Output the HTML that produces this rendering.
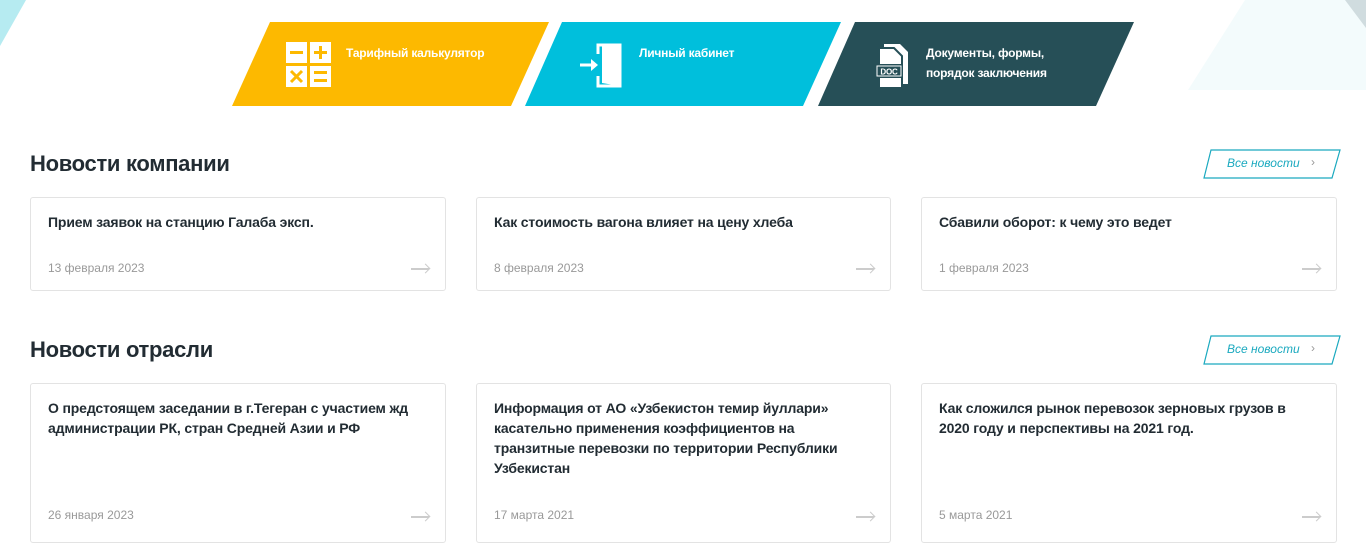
<!DOCTYPE html>
<html><head><meta charset="utf-8"><style>
*{margin:0;padding:0;box-sizing:border-box}
body{width:1366px;height:539px;overflow:hidden;background:#fff;font-family:"Liberation Sans",sans-serif;position:relative;color:#222c33}
.abs{position:absolute}
.ban{position:absolute;top:22px;height:84px;color:#fff;font-weight:bold;font-size:12px;line-height:20px;letter-spacing:-0.2px}
.ban svg.bg{position:absolute;left:0;top:0}
.ban .t{position:absolute;top:43px}
h2{position:absolute;left:30px;font-size:22px;font-weight:bold;color:#222c33;letter-spacing:-0.3px}
.btn{position:absolute;left:1203px;width:138px;height:30px}
.btn span{position:absolute;left:24px;top:7px;font-size:12px;font-style:italic;color:#1aa9bf}
.btn b{position:absolute;left:108px;top:6px;font-size:12px;color:#999;font-weight:normal}
.card{position:absolute;border:1px solid #e3e3e3;border-radius:3px;background:#fff}
.card .h{position:absolute;left:17px;top:14px;font-size:14px;font-weight:bold;line-height:20px;color:#222c33;width:385px;letter-spacing:-0.15px}
.card .d{position:absolute;left:17px;font-size:12px;color:#999}
.card .a{position:absolute;right:16px;width:18px;height:1.5px;background:#ccc}
.card .a:after{content:"";position:absolute;right:0;top:-3px;width:6px;height:6px;border-top:1.5px solid #ccc;border-right:1.5px solid #ccc;transform:rotate(45deg)}
</style></head><body>
<svg class="abs" style="left:0;top:0" width="1366" height="100">
<polygon points="0,0 26,0 0,46" fill="#b6ebf1"/>
<polygon points="1245,0 1366,0 1366,90 1188,90" fill="#f3fbfc"/>
<polygon points="1345,0 1366,0 1366,28" fill="#d0dcdf"/>
</svg>
<div class="ban" style="left:232px;width:317px">
<svg class="bg" width="317" height="84"><polygon points="38,0 317,0 279,84 0,84" fill="#fdb900"/></svg>
<svg class="abs" style="left:54px;top:20px" width="46" height="46"><rect x="0" y="0" width="21" height="21" fill="#fff"/><rect x="4" y="9" width="13" height="3" fill="#fdb900"/><rect x="24" y="0" width="21" height="21" fill="#fff"/><rect x="28" y="9" width="13" height="3" fill="#fdb900"/><rect x="33" y="4" width="3" height="13" fill="#fdb900"/><rect x="0" y="24" width="21" height="21" fill="#fff"/><path d="M5 29 L16 40 M16 29 L5 40" stroke="#fdb900" stroke-width="3"/><rect x="24" y="24" width="21" height="21" fill="#fff"/><rect x="28" y="29" width="13" height="3" fill="#fdb900"/><rect x="28" y="37" width="13" height="3" fill="#fdb900"/></svg>
<div class="t" style="left:114px;top:21px">Тарифный калькулятор</div></div>
<div class="ban" style="left:525px;width:316px">
<svg class="bg" width="316" height="84"><polygon points="37,0 316,0 278,84 0,84" fill="#00bfdc"/></svg>
<svg class="abs" style="left:53px;top:20px" width="46" height="46"><path d="M20 12 V3 H42 V44 H20 V34" stroke="#fff" stroke-width="3" fill="none"/><polygon points="24,4 42,3 42,44 24,41" fill="#fff"/><path d="M2 23 H15" stroke="#fff" stroke-width="3"/><polygon points="13,17 20,23 13,29" fill="#fff"/></svg>
<div class="t" style="left:114px;top:21px">Личный кабинет</div></div>
<div class="ban" style="left:818px;width:316px">
<svg class="bg" width="316" height="84"><polygon points="37,0 316,0 278,84 0,84" fill="#264f57"/></svg>
<svg class="abs" style="left:56px;top:20px" width="40" height="46"><path d="M10 2 H26 L34 10 V42 H10 Z" fill="#fff"/><path d="M5 6 H20 L28 14 V46 H5 Z" fill="#fff" stroke="#264f57" stroke-width="2"/><rect x="1" y="22" width="28" height="14" fill="#264f57"/><rect x="3" y="24" width="24" height="10" fill="none" stroke="#fff" stroke-width="1"/><text x="15" y="32.5" font-size="8" font-weight="bold" fill="#fff" text-anchor="middle" font-family="Liberation Sans">DOC</text></svg>
<div class="t" style="left:108px;top:21px">Документы, формы,<br>порядок заключения</div></div>

<h2 style="top:151px">Новости компании</h2>
<div class="btn" style="top:149px"><svg class="abs" width="138" height="30"><polygon points="8,1 137,1 129,29 1,29" fill="none" stroke="#1aa9bf" stroke-width="1.2"/></svg><span>Все новости</span><b>›</b></div>
<div class="card" style="left:30px;top:197px;width:416px;height:94px"><div class="h">Прием заявок на станцию Галаба эксп.</div><div class="d" style="top:63px">13 февраля 2023</div><div class="a" style="top:70px"></div></div>
<div class="card" style="left:476px;top:197px;width:415px;height:94px"><div class="h">Как стоимость вагона влияет на цену хлеба</div><div class="d" style="top:63px">8 февраля 2023</div><div class="a" style="top:70px"></div></div>
<div class="card" style="left:921px;top:197px;width:416px;height:94px"><div class="h">Сбавили оборот: к чему это ведет</div><div class="d" style="top:63px">1 февраля 2023</div><div class="a" style="top:70px"></div></div>

<h2 style="top:337px">Новости отрасли</h2>
<div class="btn" style="top:335px"><svg class="abs" width="138" height="30"><polygon points="8,1 137,1 129,29 1,29" fill="none" stroke="#1aa9bf" stroke-width="1.2"/></svg><span>Все новости</span><b>›</b></div>
<div class="card" style="left:30px;top:383px;width:416px;height:160px"><div class="h">О предстоящем заседании в г.Тегеран с участием жд администрации РК, стран Средней Азии и РФ</div><div class="d" style="top:124px">26 января 2023</div><div class="a" style="top:132px"></div></div>
<div class="card" style="left:476px;top:383px;width:415px;height:160px"><div class="h" style="width:360px">Информация от АО «Узбекистон темир йуллари» касательно применения коэффициентов на транзитные перевозки по территории Республики Узбекистан</div><div class="d" style="top:124px">17 марта 2021</div><div class="a" style="top:132px"></div></div>
<div class="card" style="left:921px;top:383px;width:416px;height:160px"><div class="h" style="width:360px">Как сложился рынок перевозок зерновых грузов в 2020 году и перспективы на 2021 год.</div><div class="d" style="top:124px">5 марта 2021</div><div class="a" style="top:132px"></div></div>
</body></html>
